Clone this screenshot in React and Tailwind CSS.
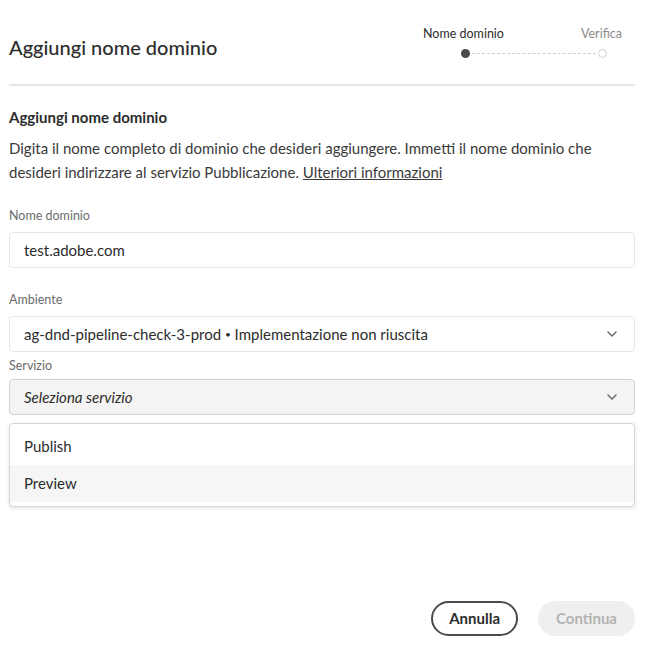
import { ChevronDown } from 'lucide-react';

function Stepper() {
    return (
        <div className="relative w-[216px] h-[40px]">
            <div className="absolute left-[4px] top-[5px] text-[12.5px] text-[#2c2c2c]">Nome dominio</div>
            <div className="absolute left-[162px] top-[5px] text-[12.5px] text-[#8a8a8a]">Verifica</div>
            <div className="absolute left-[42px] top-[29px] w-[9px] h-[9px] rounded-full bg-[#4b4b4b]" />
            <div className="absolute left-[53px] top-[33px] w-[124px] border-t border-dashed border-[#cfcfcf]" />
            <div className="absolute left-[179px] top-[29px] w-[9px] h-[9px] rounded-full border border-[#cfcfcf] bg-white" />
        </div>
    );
}

export default function App() {
    return (
        <div className="w-[656px] h-[653px] bg-white font-['Lato',sans-serif] text-[#2c2c2c] relative">
            <div className="px-[9px] pt-[20px]">
                <header className="flex items-start justify-between pr-[12px]">
                    <h1 className="text-[20px] font-medium mt-[12px] text-[#2c2c2c]">Aggiungi nome dominio</h1>
                    <Stepper />
                </header>
                <div className="mt-[22px] mr-[12px] h-[2px] bg-[#e6e6e6]" />

                <h2 className="mt-[20px] text-[15px] font-bold">Aggiungi nome dominio</h2>
                <p className="mt-[7px] text-[15px] leading-[24px] text-[#3a3a3a]">
                    Digita il nome completo di dominio che desideri aggiungere. Immetti il nome dominio che desideri indirizzare al servizio Pubblicazione.{' '}
                    <a href="#" className="underline">Ulteriori informazioni</a>
                </p>

                <div className="mt-[23px] mr-[12px]">
                    <label className="block text-[12.5px] text-[#6b6b6b]">Nome dominio</label>
                    <div className="mt-[7px] h-[36px] rounded-[4px] border border-[#e6e6e6] flex items-center px-[14px] text-[15px]">
                        test.adobe.com
                    </div>
                </div>

                <div className="mt-[23px] mr-[12px]">
                    <label className="block text-[12.5px] text-[#6b6b6b]">Ambiente</label>
                    <div className="mt-[6px] h-[36px] rounded-[4px] border border-[#e6e6e6] flex items-center justify-between px-[14px] text-[15px]">
                        <span>ag-dnd-pipeline-check-3-prod <span className="text-[10px] align-[2px]">•</span> Implementazione non riuscita</span>
                        <ChevronDown size={16} strokeWidth={2.25} className="text-[#6b6b6b]" />
                    </div>
                </div>

                <div className="mt-[5px] mr-[12px]">
                    <label className="block text-[12.5px] text-[#6b6b6b]">Servizio</label>
                    <div className="mt-[3px] h-[36px] rounded-[4px] border border-[#d0d0d0] bg-[#f4f4f4] flex items-center justify-between px-[14px] text-[15px]">
                        <span className="italic">Seleziona servizio</span>
                        <ChevronDown size={16} strokeWidth={2.25} className="text-[#6b6b6b]" />
                    </div>
                </div>

                <div className="mt-[8px] mr-[12px] rounded-[4px] border border-[#d6d6d6] bg-white shadow-[0_1px_4px_rgba(0,0,0,0.12)] py-[4px] overflow-hidden">
                    <div className="h-[37px] flex items-center px-[14px] text-[15px]">Publish</div>
                    <div className="h-[37px] flex items-center px-[14px] text-[15px] bg-[#f6f6f6]">Preview</div>
                </div>
            </div>

            <div className="absolute right-[21px] bottom-[17px] flex gap-[20px]">
                <button className="h-[35px] px-[16px] rounded-full border-2 border-[#4b4b4b] text-[15px] font-bold text-[#2c2c2c]">Annulla</button>
                <button className="h-[35px] px-[18px] rounded-full bg-[#efefef] text-[15px] font-bold text-[#b3b3b3]">Continua</button>
            </div>
        </div>
    );
}
